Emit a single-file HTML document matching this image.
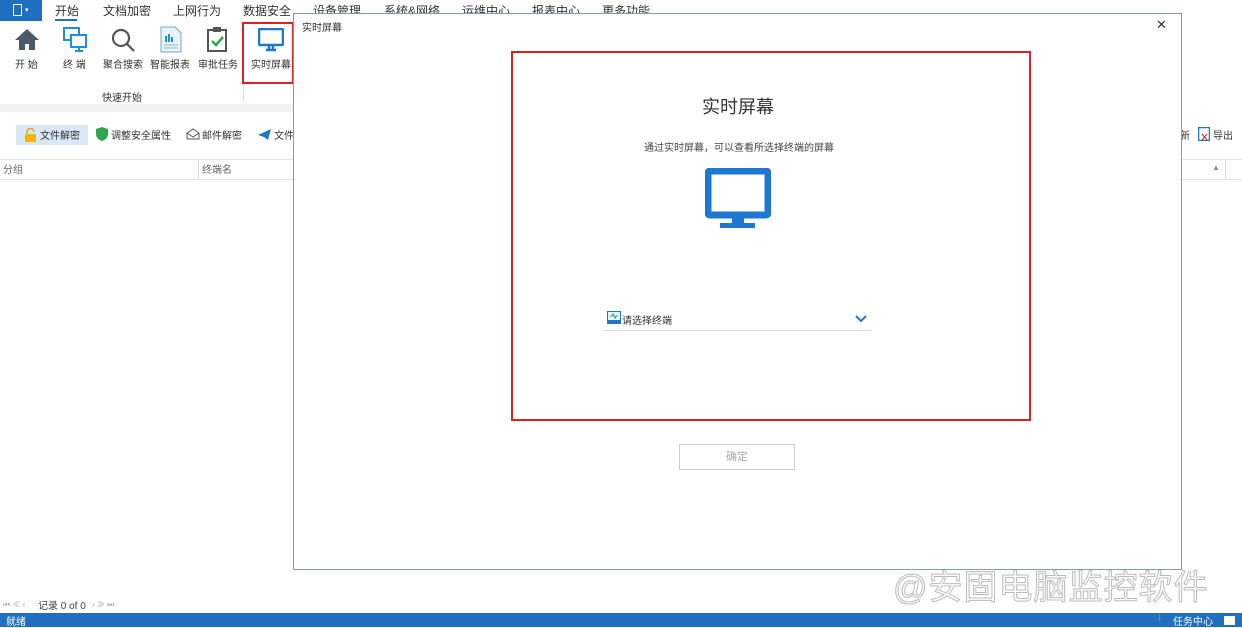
<!DOCTYPE html>
<html><head><meta charset="utf-8"><style>
*{margin:0;padding:0;box-sizing:border-box}
body{width:1242px;height:627px;overflow:hidden;background:#fff;font-family:"Liberation Sans","Noto Sans CJK SC",sans-serif;position:relative;color:#333}
.a{position:absolute;white-space:nowrap}
.tab{font-size:12px;color:#333;top:2px}
.lbl{font-size:10px;color:#333;top:56px}
</style></head><body>
<div class="a" style="left:0;top:0;width:42px;height:21px;background:#1e6fc0"></div>
<div class="a" style="left:13px;top:4px;width:9px;height:12px;border:1.5px solid #fff"></div>
<div class="a" style="left:25px;top:6px;color:#fff;font-size:7px">▾</div>
<div class="a tab" style="left:55px">开始</div>
<div class="a" style="left:55px;top:19px;width:22px;height:2px;background:#1e6fc0"></div>
<div class="a tab" style="left:103px">文档加密</div>
<div class="a tab" style="left:173px">上网行为</div>
<div class="a tab" style="left:243px">数据安全</div>
<div class="a tab" style="left:313px">设备管理</div>
<div class="a tab" style="left:384px">系统&网络</div>
<div class="a tab" style="left:462px">运维中心</div>
<div class="a tab" style="left:532px">报表中心</div>
<div class="a tab" style="left:602px">更多功能</div>
<svg class="a" style="left:14px;top:27px" width="26" height="24"><path d="M13 2L1 13h4v10h6v-6h4v6h6V13h4z" fill="#4a5a6a"/></svg>
<svg class="a" style="left:62px;top:26px" width="28" height="28" fill="none" stroke="#1e8fdc" stroke-width="2"><rect x="2" y="2" width="15" height="12"/><rect x="9" y="9" width="15" height="12" fill="#fff"/><path d="M13 25h8M17 21v4"/></svg>
<svg class="a" style="left:110px;top:27px" width="26" height="26" fill="none" stroke="#555" stroke-width="2.2"><circle cx="11" cy="11" r="8"/><path d="M17 17l7 7"/></svg>
<svg class="a" style="left:160px;top:26px" width="22" height="27"><path d="M1 1h14l6 6v19H1z" fill="#e8f3f8" stroke="#7ab" /><rect x="5" y="10" width="2" height="6" fill="#1e8fdc"/><rect x="8" y="8" width="2" height="8" fill="#1e8fdc"/><rect x="11" y="11" width="2" height="5" fill="#1e8fdc"/><path d="M4 19h14M4 22h14" stroke="#8bc" /></svg>
<svg class="a" style="left:206px;top:26px" width="22" height="27"><rect x="2" y="4" width="18" height="21" fill="#fff" stroke="#555" stroke-width="2"/><rect x="7" y="1" width="8" height="5" fill="#555"/><path d="M6 15l4 4 7-8" stroke="#2ea44f" stroke-width="2.5" fill="none"/></svg>
<svg class="a" style="left:258px;top:28px" width="26" height="24"><rect x="1" y="1" width="24" height="16" rx="1" fill="none" stroke="#1e78c8" stroke-width="2.5"/><path d="M11 18v3M15 18v3M8 22h10" stroke="#1e78c8" stroke-width="2.5"/></svg>
<div class="a lbl" style="left:15px">开 始</div>
<div class="a lbl" style="left:63px">终 端</div>
<div class="a lbl" style="left:103px">聚合搜索</div>
<div class="a lbl" style="left:150px">智能报表</div>
<div class="a lbl" style="left:198px">审批任务</div>
<div class="a lbl" style="left:251px">实时屏幕</div>
<div class="a" style="left:242px;top:22px;width:52px;height:62px;border:2px solid #e02020"></div>
<div class="a" style="left:243px;top:84px;width:1px;height:18px;background:#ddd"></div>
<div class="a" style="left:102px;top:89px;font-size:10px">快速开始</div>
<div class="a" style="left:0;top:104px;width:293px;height:8px;background:#f2f2f2"></div>
<div class="a" style="left:16px;top:125px;width:72px;height:20px;background:#d8e8f5"></div>
<svg class="a" style="left:25px;top:128px" width="11" height="14"><path d="M2 6V4a3.5 3.5 0 017 0" stroke="#e8a317" stroke-width="1.5" fill="none"/><rect x="0" y="6" width="11" height="8" fill="#f5b800"/></svg>
<div class="a" style="left:40px;top:127px;font-size:10px">文件解密</div>
<svg class="a" style="left:96px;top:127px" width="12" height="14"><path d="M6 0L0 2v5c0 4 3 6 6 7 3-1 6-3 6-7V2z" fill="#2ea44f"/></svg>
<div class="a" style="left:111px;top:127px;font-size:10px">调整安全属性</div>
<svg class="a" style="left:186px;top:128px" width="14" height="12" fill="none" stroke="#555"><path d="M1 5l6-4 6 4v6H1zM1 5l6 4 6-4"/></svg>
<div class="a" style="left:202px;top:127px;font-size:10px">邮件解密</div>
<svg class="a" style="left:258px;top:129px" width="13" height="11"><path d="M0 6L13 0 10 11 6 8z" fill="#1e78c8"/></svg>
<div class="a" style="left:274px;top:127px;font-size:10px">文件</div>
<div class="a" style="left:1180px;top:127px;font-size:10px">新</div>
<svg class="a" style="left:1198px;top:127px" width="12" height="14"><rect x="0.5" y="0.5" width="11" height="13" fill="#fff" stroke="#1e78c8" stroke-width="1.5"/><path d="M4 7l5 6M9 7l-5 6" stroke="#e02020"/></svg>
<div class="a" style="left:1213px;top:127px;font-size:10px">导出</div>
<div class="a" style="left:0;top:159px;width:1242px;height:21px;border-top:1px solid #e4e4e4;border-bottom:1px solid #ddd"></div>
<div class="a" style="left:3px;top:161px;font-size:10px;color:#666">分组</div>
<div class="a" style="left:198px;top:160px;width:1px;height:19px;background:#ddd"></div>
<div class="a" style="left:202px;top:161px;font-size:10px;color:#666">终端名</div>
<div class="a" style="left:1212px;top:163px;font-size:8px;color:#888">▲</div>
<div class="a" style="left:1225px;top:160px;width:1px;height:19px;background:#ddd"></div>
<div class="a" style="left:3px;top:599px;font-size:8px;color:#aaa">⏮ ≪ ‹</div>
<div class="a" style="left:38px;top:597px;font-size:10px;color:#444">记录 0 of 0</div>
<div class="a" style="left:92px;top:599px;font-size:8px;color:#aaa">› ≫ ⏭</div>
<div class="a" style="left:0;top:613px;width:1242px;height:14px;background:#1e6fc0"></div>
<div class="a" style="left:6px;top:613px;font-size:10px;color:#fff">就绪</div>
<div class="a" style="left:1157px;top:611px;font-size:11px;color:#7c3">↓</div>
<div class="a" style="left:1173px;top:613px;font-size:10px;color:#fff">任务中心</div>
<div class="a" style="left:1224px;top:616px;width:11px;height:9px;background:#fff"></div>
<div class="a" style="left:893px;top:560px;font-size:34px;color:#fff;-webkit-text-stroke:1px #bbb;letter-spacing:1px">@安固电脑监控软件</div>
<div class="a" style="left:293px;top:13px;width:889px;height:557px;background:#fff;border:1px solid #7f9db9"></div>
<div class="a" style="left:302px;top:19px;font-size:10px">实时屏幕</div>
<div class="a" style="left:1156px;top:17px;font-size:13px;color:#333">✕</div>
<div class="a" style="left:511px;top:51px;width:520px;height:370px;border:2px solid #e02020"></div>
<div class="a" style="left:702px;top:93px;font-size:18px;color:#333">实时屏幕</div>
<div class="a" style="left:644px;top:139px;font-size:10px;color:#444">通过实时屏幕，可以查看所选择终端的屏幕</div>
<svg class="a" style="left:705px;top:168px" width="66" height="62"><rect x="3" y="3" width="60" height="44" rx="2" fill="none" stroke="#1e78d2" stroke-width="7"/><rect x="27" y="49" width="12" height="8" fill="#1e78d2"/><rect x="15" y="55" width="35" height="5" fill="#1e78d2"/></svg>
<svg class="a" style="left:607px;top:311px" width="14" height="13"><rect x="0.5" y="0.5" width="13" height="9" fill="#e6f2fb" stroke="#1e78c8"/><path d="M3 5h2l1-2 2 4 1-2h2" stroke="#2ea44f" fill="none"/><rect x="0" y="10" width="14" height="3" fill="#1e78c8"/></svg>
<div class="a" style="left:622px;top:312px;font-size:10px">请选择终端</div>
<svg class="a" style="left:855px;top:315px" width="12" height="8"><path d="M1 1l5 5 5-5" stroke="#1e78c8" stroke-width="2" fill="none"/></svg>
<div class="a" style="left:603px;top:330px;width:268px;height:1px;background:#ddd"></div>
<div class="a" style="left:679px;top:444px;width:116px;height:26px;border:1px solid #ccc;font-size:11px;color:#aaa;text-align:center;line-height:24px">确定</div>
</body></html>
